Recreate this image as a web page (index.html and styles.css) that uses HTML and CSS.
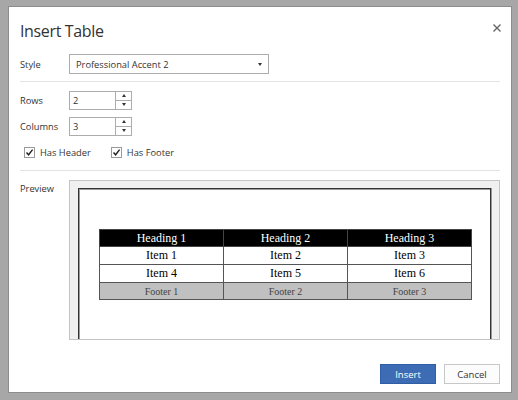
FILE: index.html
```html
<!DOCTYPE html>
<html>
<head>
<meta charset="utf-8">
<link rel="stylesheet" href="styles.css">
</head>
<body>
<div class="dialog">
  <div class="title-bar">
    <h1 class="title">Insert Table</h1>
    <svg class="close" width="10" height="10" viewBox="0 0 10 10"><path d="M1.5 1.5 L8.5 8.5 M8.5 1.5 L1.5 8.5" stroke="#666" stroke-width="1.4" fill="none"/></svg>
  </div>
  <div class="field style-row">
    <span class="label">Style</span>
    <div class="select"><span>Professional Accent 2</span><span class="caret"></span></div>
  </div>
  <div class="sep sep1"></div>
  <div class="field rows-row">
    <span class="label">Rows</span>
    <div class="spinner"><span class="value">2</span><span class="btns"><span class="up"></span><span class="down"></span></span></div>
  </div>
  <div class="field cols-row">
    <span class="label">Columns</span>
    <div class="spinner"><span class="value">3</span><span class="btns"><span class="up"></span><span class="down"></span></span></div>
  </div>
  <div class="checks">
    <label class="check"><span class="box"><svg width="9" height="9" viewBox="0 0 9 9"><path d="M1.5 4.5 L3.6 6.8 L7.6 1.6" stroke="#222" stroke-width="1.4" fill="none"/></svg></span>Has Header</label>
    <label class="check"><span class="box"><svg width="9" height="9" viewBox="0 0 9 9"><path d="M1.5 4.5 L3.6 6.8 L7.6 1.6" stroke="#222" stroke-width="1.4" fill="none"/></svg></span>Has Footer</label>
  </div>
  <div class="sep sep2"></div>
  <div class="field preview-row">
    <span class="label">Preview</span>
    <div class="preview">
      <div class="page">
        <table class="tbl">
          <tr class="head"><td>Heading 1</td><td>Heading 2</td><td>Heading 3</td></tr>
          <tr class="item"><td>Item 1</td><td>Item 2</td><td>Item 3</td></tr>
          <tr class="item"><td>Item 4</td><td>Item 5</td><td>Item 6</td></tr>
          <tr class="foot"><td>Footer 1</td><td>Footer 2</td><td>Footer 3</td></tr>
        </table>
      </div>
    </div>
  </div>
  <div class="actions">
    <button class="btn primary">Insert</button>
    <button class="btn">Cancel</button>
  </div>
</div>
</body>
</html>
```
FILE: styles.css
```css
html, body { margin: 0; padding: 0; }
body {
  background: #a7a7a7;
  width: 518px;
  height: 400px;
  padding: 6px 0 0 8px;
  box-sizing: border-box;
  font-family: "Open Sans", "Noto Sans", sans-serif;
  font-size: 9.3px;
  color: #333;
}
.dialog {
  width: 504px;
  height: 387px;
  box-sizing: border-box;
  background: #fff;
  border: 1px solid #8c8c8c;
  padding: 0 11px;
  display: flex;
  flex-direction: column;
}
.title-bar {
  display: flex;
  justify-content: space-between;
  align-items: flex-start;
  margin-top: 13px;
  height: 22px;
}
.title {
  margin: 0;
  font-size: 16px;
  font-weight: 400;
  letter-spacing: -0.35px;
  line-height: 22px;
  color: #333;
}
.close { margin-top: 3px; margin-right: -2px; }
.field { display: flex; align-items: center; }
.label { width: 49px; flex: none; }
.style-row { margin-top: 12px; height: 20px; }
.select {
  width: 200px;
  height: 20px;
  box-sizing: border-box;
  border: 1px solid #acacac;
  display: flex;
  align-items: center;
  justify-content: space-between;
  padding: 0 6px 0 6px;
}
.caret {
  width: 0; height: 0;
  border-left: 2.5px solid transparent;
  border-right: 2.5px solid transparent;
  border-top: 3px solid #333;
}
.sep { height: 1px; background: #e3e3e3; }
.sep1 { margin-top: 7px; }
.rows-row { margin-top: 8px; height: 20px; }
.cols-row { margin-top: 6px; height: 20px; }
.spinner {
  width: 63px;
  height: 19px;
  box-sizing: border-box;
  border: 1px solid #acacac;
  display: flex;
}
.spinner .value { flex: 1; padding-left: 3px; line-height: 17px; }
.spinner .btns {
  width: 15px;
  border-left: 1px solid #acacac;
  display: flex;
  flex-direction: column;
}
.spinner .up, .spinner .down {
  flex: 1;
  display: flex;
  align-items: center;
  justify-content: center;
}
.spinner .up { border-bottom: 1px solid #acacac; }
.spinner .up::after {
  content: "";
  border-left: 2.5px solid transparent;
  border-right: 2.5px solid transparent;
  border-bottom: 3px solid #333;
}
.spinner .down::after {
  content: "";
  border-left: 2.5px solid transparent;
  border-right: 2.5px solid transparent;
  border-top: 3px solid #333;
}
.checks {
  margin-top: 11px;
  height: 11px;
  display: flex;
  align-items: center;
  gap: 20px;
  padding-left: 4px;
}
.check { display: flex; align-items: center; gap: 5px; }
.box {
  width: 11px;
  height: 11px;
  box-sizing: border-box;
  border: 1px solid #9a9a9a;
  display: flex;
  align-items: center;
  justify-content: center;
}
.sep2 { margin-top: 12px; }
.preview-row { margin-top: 9px; height: 160px; align-items: flex-start; }
.preview-row .label { margin-top: 2px; }
.preview {
  width: 431px;
  height: 160px;
  box-sizing: border-box;
  border: 1px solid #c4c4c4;
  background: #f0f0f0;
  padding: 7px 8px 0 8px;
  overflow: hidden;
}
.page {
  height: 200px;
  background: #fff;
  border: 1px solid #333;
  box-shadow: inset 1px 1px 0 #9a9a9a, 1px 0 0 #999;
  padding: 40px 0 0 20px;
  box-sizing: border-box;
}
.tbl {
  border-collapse: collapse;
  font-family: "Liberation Serif", serif;
  font-size: 12px;
}
.tbl td {
  width: 123px;
  border: 1px solid #555;
  text-align: center;
  padding: 0;
}
.tbl .head td { background: #000; color: #fff; height: 16px; border-color: #444; }
.tbl .item td { height: 17px; color: #000; }
.tbl .foot td { background: #c0c0c0; color: #444; font-size: 10px; height: 16px; }
.actions {
  margin-top: 24px;
  display: flex;
  justify-content: flex-end;
  gap: 8px;
}
.btn {
  width: 56px;
  height: 20px;
  box-sizing: border-box;
  border: 1px solid #c8c8c8;
  background: #fcfcfc;
  font-family: "Open Sans", "Noto Sans", sans-serif;
  font-size: 9.5px;
  color: #333;
  padding: 0;
}
.btn.primary {
  background: #3d6cb5;
  border-color: #2f5da6;
  color: #fff;
}
```
